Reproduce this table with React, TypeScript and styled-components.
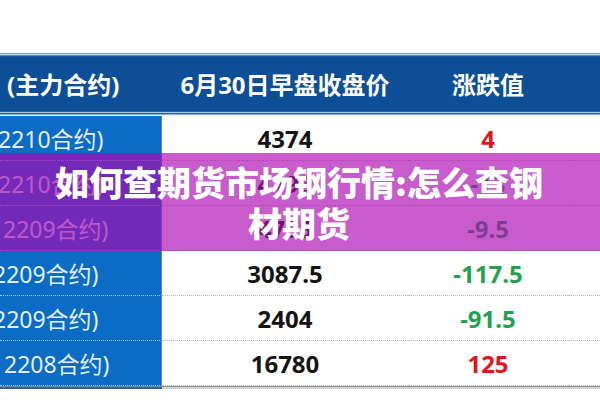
import React from "react";
import styled, { createGlobalStyle } from "styled-components";

const GlobalStyle = createGlobalStyle`
  html, body {
    margin: 0;
    padding: 0;
    background: #ffffff;
  }
  body {
    width: 600px;
    height: 400px;
    overflow: hidden;
    font-family: "Noto Sans", "Noto Sans CJK SC", sans-serif;
  }
`;

const Page = styled.div`
  position: relative;
  width: 600px;
  height: 400px;
  overflow: hidden;
  background: #ffffff;
  padding-top: 53px;
  box-sizing: border-box;
`;

const COLS = "162px 246px 160px 1fr";

const HeaderRow = styled.div`
  display: grid;
  grid-template-columns: ${COLS};
  height: 63px;
  box-sizing: border-box;
  padding: 4px 0 7px;
  background: #0c4f97;
  box-shadow:
    inset 0 1px 0 #6f95c4,
    inset 0 2px 0 #c9daee,
    inset 0 3px 0 #5a86bb,
    inset 0 4px 0 #1d5899,
    inset 0 -1px 0 #eef4fa,
    inset 0 -2px 0 #8fb1d8,
    inset 0 -3px 0 #2c5f9c,
    inset 0 -4px 0 #a7c3e2,
    inset 0 -5px 0 #2a64a6;
`;

const HeadCell = styled.div<{ $align?: "left" | "center" }>`
  display: flex;
  align-items: center;
  justify-content: ${(p) => (p.$align === "left" ? "flex-start" : "center")};
  padding-left: ${(p) => (p.$align === "left" ? "7px" : "0")};
  color: #ffffff;
  font-family: "Noto Sans", "Noto Sans CJK SC", sans-serif;
  font-weight: 700;
  font-size: 24px;
  white-space: nowrap;
  overflow: hidden;
`;

const BodyRow = styled.div`
  display: grid;
  grid-template-columns: ${COLS};
  height: 45px;
`;

const NameCell = styled.div<{ $shift: number }>`
  display: flex;
  align-items: center;
  background: #0a6cc4;
  border-right: 1px solid #4d8fd0;
  border-bottom: 1px dotted #9cc6ee;
  color: #e3eefa;
  font-family: "Noto Sans", "Noto Sans CJK SC", sans-serif;
  font-size: 23px;
  font-weight: 400;
  white-space: nowrap;
  overflow: hidden;
  text-indent: ${(p) => p.$shift}px;
`;

const ValueCell = styled.div<{ $color?: string }>`
  display: flex;
  align-items: center;
  justify-content: center;
  border-bottom: 1px dotted #b8b8b8;
  color: ${(p) => p.$color || "#141414"};
  font-family: "Noto Sans", "Noto Sans CJK SC", sans-serif;
  font-size: 24px;
  font-weight: 700;
  white-space: nowrap;
`;

const FillCell = styled.div`
  border-bottom: 1px dotted #b8b8b8;
`;

const BottomRule = styled.div`
  display: grid;
  grid-template-columns: 162px 1fr;
  height: 3px;
`;

const BottomLeft = styled.div`
  background: #0a6cc4;
  border-top: 1px solid #6a8fb5;
  border-bottom: 2px solid #3a5f88;
`;

const BottomRight = styled.div`
  border-top: 1px solid #8c8c8c;
  border-bottom: 2px solid #d2d2d2;
`;

const Banner = styled.div`
  position: absolute;
  left: 0;
  right: 0;
  top: 153px;
  height: 98px;
  background: rgba(172, 8, 178, 0.66);
  display: flex;
  align-items: center;
  justify-content: center;
`;

const BannerTitle = styled.h1`
  margin: 0;
  color: #ffffff;
  font-family: "Noto Sans CJK SC", sans-serif;
  font-weight: 900;
  font-size: 34px;
  line-height: 41px;
  text-align: center;
  transform: translateX(-1px);
`;

const GREEN = "#1fa34f";
const RED = "#e3141c";

const rows = [
  { name: "2210合约)", shift: -2, price: "4374", change: "4", color: RED },
  { name: "2210合约)", shift: -2, price: "4196", change: "-13", color: GREEN },
  { name: "2209合约)", shift: 3, price: "4795", change: "-9.5", color: GREEN },
  { name: "2209合约)", shift: -7, price: "3087.5", change: "-117.5", color: GREEN },
  { name: "2209合约)", shift: -7, price: "2404", change: "-91.5", color: GREEN },
  { name: "2208合约)", shift: 4, price: "16780", change: "125", color: RED },
];

export default function App() {
  return (
    <>
      <GlobalStyle />
      <Page>
        <HeaderRow>
          <HeadCell $align="left">(主力合约)</HeadCell>
          <HeadCell>6月30日早盘收盘价</HeadCell>
          <HeadCell>涨跌值</HeadCell>
          <HeadCell />
        </HeaderRow>
        {rows.map((r, i) => (
          <BodyRow key={i}>
            <NameCell $shift={r.shift}>{r.name}</NameCell>
            <ValueCell>{r.price}</ValueCell>
            <ValueCell $color={r.color}>{r.change}</ValueCell>
            <FillCell />
          </BodyRow>
        ))}
        <BottomRule>
          <BottomLeft />
          <BottomRight />
        </BottomRule>
        <Banner>
          <BannerTitle>
            如何查期货市场钢行情:怎么查钢
            <br />
            材期货
          </BannerTitle>
        </Banner>
      </Page>
    </>
  );
}
